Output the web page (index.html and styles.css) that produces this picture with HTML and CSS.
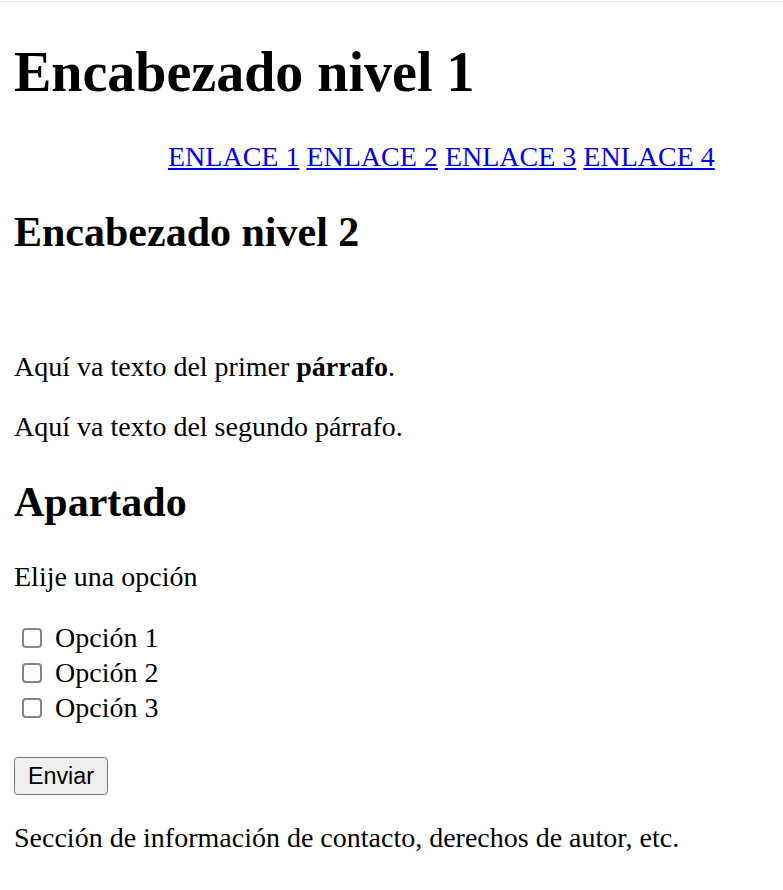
FILE: index.html
```html
<!DOCTYPE html>
<html lang="es">
<head>
<meta charset="utf-8">
<title>Página</title>
<link rel="stylesheet" href="styles.css">
</head>
<body>
<div class="topline"></div>
<div class="page">
  <header>
    <h1 class="h1">Encabezado nivel 1</h1>
    <nav>
      <ul class="nav-list">
        <li><a href="#">ENLACE 1</a></li>
        <li><a href="#">ENLACE 2</a></li>
        <li><a href="#">ENLACE 3</a></li>
        <li><a href="#">ENLACE 4</a></li>
      </ul>
    </nav>
  </header>
  <main>
    <article>
      <h2 class="h2">Encabezado nivel 2</h2>
      <div class="spacer"></div>
      <p class="para">Aquí va texto del primer <strong>párrafo</strong>.</p>
      <p class="para">Aquí va texto del segundo párrafo.</p>
    </article>
    <aside>
      <h2 class="h2">Apartado</h2>
    </aside>
    <form class="form">
      <p class="para">Elije una opción</p>
      <div class="options">
        <label class="option"><input class="check" type="checkbox"><span>Opción 1</span></label>
        <label class="option"><input class="check" type="checkbox"><span>Opción 2</span></label>
        <label class="option"><input class="check" type="checkbox"><span>Opción 3</span></label>
      </div>
      <button class="btn" type="button">Enviar</button>
    </form>
  </main>
  <footer>
    <p class="para footer-text">Sección de información de contacto, derechos de autor, etc.</p>
  </footer>
</div>
</body>
</html>
```

FILE: styles.css
```css
html, body {
  margin: 0;
  padding: 0;
  background: #ffffff;
}
body {
  font-family: "Liberation Serif", "Times New Roman", serif;
  font-size: 28px;
  color: #000000;
}
.topline {
  height: 1px;
  margin-top: 1px;
  background: #dcdcdc;
}
.page {
  padding: 0 14px;
}
.h1 {
  font-size: 56px;
  font-weight: bold;
  margin: 37.5px 0 37.5px;
  line-height: normal;
}
.nav-list {
  list-style: none;
  margin: 0;
  padding: 0 0 0 154px;
}
.nav-list li {
  display: inline;
}
.nav-list a {
  color: #0000ee;
  text-decoration: underline;
}
.h2 {
  font-size: 42px;
  font-weight: bold;
  margin: 34.86px 0;
  line-height: normal;
}
.spacer {
  height: 32.2px;
  margin: 28px 0;
}
.para {
  margin: 28px 0;
}
.options {
  display: flex;
  flex-direction: column;
}
.option {
  display: flex;
  align-items: center;
  height: 35px;
}
.check {
  appearance: none;
  -webkit-appearance: none;
  box-sizing: border-box;
  width: 20px;
  height: 20px;
  margin: 0 13px 0 8px;
  border: 2px solid #858585;
  border-radius: 4px;
  background: #ffffff;
}
.btn {
  display: block;
  margin-top: 31.6px;
  width: 94px;
  height: 38px;
  padding: 0;
  font-family: "Liberation Sans", Arial, sans-serif;
  font-size: 23.3px;
  color: #000000;
  background: #efefef;
  border: 1px solid #767676;
  border-radius: 3.5px;
}
.footer-text {
  margin-top: 26.5px;
}
```
